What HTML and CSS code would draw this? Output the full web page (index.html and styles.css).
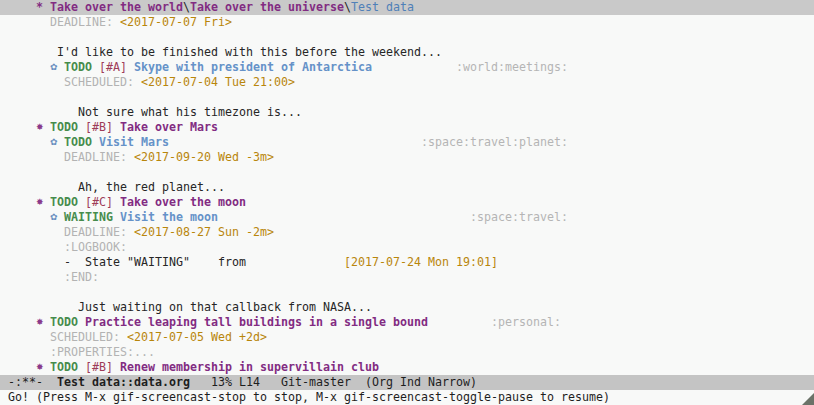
FILE: index.html
```html
<!DOCTYPE html>
<html>
<head>
<meta charset="utf-8">
<link rel="stylesheet" href="styles.css">
</head>
<body>
<div class="frame">
  <div class="buffer">
    <div class="line header">    <span class="h1">*</span> <span class="h1">Take over the world</span><span class="sep">\</span><span class="h1">Take over the universe</span><span class="sep">\</span><span class="crumb">Test data</span></div>
    <div class="line">      <span class="kw">DEADLINE:</span> <span class="date">&lt;2017-07-07 Fri&gt;</span></div>
    <div class="line"></div>
    <div class="line">       I'd like to be finished with this before the weekend...</div>
    <div class="line">      <span class="bul b2">✿</span> <span class="todo">TODO</span> <span class="pri">[#A]</span> <span class="h2">Skype with president of Antarctica</span>            <span class="tag">:world:meetings:</span></div>
    <div class="line">        <span class="kw">SCHEDULED:</span> <span class="date">&lt;2017-07-04 Tue 21:00&gt;</span></div>
    <div class="line"></div>
    <div class="line">          Not sure what his timezone is...</div>
    <div class="line">    <span class="bul b1">✸</span> <span class="todo">TODO</span> <span class="pri">[#B]</span> <span class="h1">Take over Mars</span></div>
    <div class="line">      <span class="bul b2">✿</span> <span class="todo">TODO</span> <span class="h2">Visit Mars</span>                                    <span class="tag">:space:travel:planet:</span></div>
    <div class="line">        <span class="kw">DEADLINE:</span> <span class="date">&lt;2017-09-20 Wed -3m&gt;</span></div>
    <div class="line"></div>
    <div class="line">          Ah, the red planet...</div>
    <div class="line">    <span class="bul b1">✸</span> <span class="todo">TODO</span> <span class="pri">[#C]</span> <span class="h1">Take over the moon</span></div>
    <div class="line">      <span class="bul b2">✿</span> <span class="todo">WAITING</span> <span class="h2">Visit the moon</span>                                    <span class="tag">:space:travel:</span></div>
    <div class="line">        <span class="kw">DEADLINE:</span> <span class="date">&lt;2017-08-27 Sun -2m&gt;</span></div>
    <div class="line">        <span class="kw">:LOGBOOK:</span></div>
    <div class="line">        -  State "WAITING"    from              <span class="date">[2017-07-24 Mon 19:01]</span></div>
    <div class="line">        <span class="kw">:END:</span></div>
    <div class="line"></div>
    <div class="line">          Just waiting on that callback from NASA...</div>
    <div class="line">    <span class="bul b1">✸</span> <span class="todo">TODO</span> <span class="h1">Practice leaping tall buildings in a single bound</span>         <span class="tag">:personal:</span></div>
    <div class="line">      <span class="kw">SCHEDULED:</span> <span class="date">&lt;2017-07-05 Wed +2d&gt;</span></div>
    <div class="line">      <span class="kw">:PROPERTIES:...</span></div>
    <div class="line">    <span class="bul b1">✸</span> <span class="todo">TODO</span> <span class="pri">[#B]</span> <span class="h1">Renew membership in supervillain club</span></div>
  </div>
  <div class="line modeline">-:**-  <span class="bufname">Test data::data.org</span>   13% L14   Git-master  (Org Ind Narrow)</div>
  <div class="line echo">Go! (Press M-x gif-screencast-stop to stop, M-x gif-screencast-toggle-pause to resume)</div>
  <svg class="grip" width="12" height="12" viewBox="0 0 12 12"><polygon points="12,0 12,12 0,12" fill="#6b7268"/></svg>
</div>
</body>
</html>
```

FILE: styles.css
```css
html, body {
  margin: 0;
  padding: 0;
  background: #f8f9f8;
}
.frame {
  position: relative;
  width: 814px;
  height: 405px;
  overflow: hidden;
  background: #f8f9f8;
  font-family: "DejaVu Sans Mono", monospace;
  font-size: 11.63px;
  color: #262626;
}
.buffer {
  display: flex;
  flex-direction: column;
}
.line {
  height: 15px;
  line-height: 15px;
  white-space: pre;
  padding-left: 8px;
}
.header {
  background: #c9c9c9;
}
.h1 {
  color: #822c82;
  font-weight: bold;
}
.h2 {
  color: #6592c8;
  font-weight: bold;
}
.sep {
  color: #262626;
}
.crumb {
  color: #4f80b8;
}
.kw {
  color: #b3b3b3;
}
.date {
  color: #b8860b;
}
.todo {
  color: #468c4c;
  font-weight: bold;
}
.pri {
  color: #9e3c58;
}
.tag {
  color: #b5b5b5;
}
.bul {
  display: inline-block;
  width: 7px;
  text-align: center;
  font-family: "DejaVu Sans", sans-serif;
  font-size: 9px;
  vertical-align: top;
  overflow: visible;
}
.b1 {
  color: #8a3a8a;
}
.b2 {
  color: #6a8fbf;
}
.modeline {
  background: #c4c4c4;
  color: #1e1e1e;
}
.bufname {
  font-weight: bold;
}
.echo {
  color: #1e1e1e;
}
.grip {
  position: absolute;
  right: 0;
  bottom: 0;
}
```
